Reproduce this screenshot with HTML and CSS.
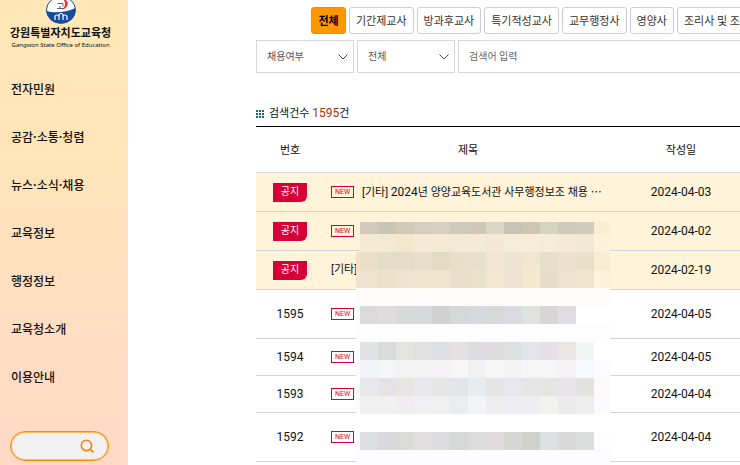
FILE: index.html
```
<!DOCTYPE html>
<html lang="ko">
<head>
    <meta charset="UTF-8">
    <meta name="viewport" content="width=device-width, initial-scale=1.0">
    <title>강원특별자치도교육청</title>
    <link rel="stylesheet" href="styles.css">
</head>
<body>
    <aside class="sidebar">
        <a href="#" class="logo">
            <svg class="emblem" viewBox="0 0 30 26" aria-hidden="true">
                <ellipse cx="15" cy="10" rx="14.500" ry="13.300" fill="#fff" stroke="#174a98"/>
                <path d="M.5 11C8 13.500 20 12.500 29.300 8C30.500 17 24 23.500 15 23.500C7 23.500 1 18 .5 11Z" fill="#174a98"/>
                <path d="M17-1C24 0 23 8 16 10C19.500 7 20 2 17-1Z" fill="#e5333e"/>
                <path d="M11.500 3.500h5.500v3M11 8.500h7M14 6v2" fill="none" stroke="#555" stroke-width=".9"/>
                <path d="M9 20v-3q0-2 2-2t2 2v3M13 20v-4.500q0-2 2-2t2 2v4.500M17 20v-3q0-2 2-2t2 2v3" fill="none" stroke="#fff" stroke-width="1.200"/>
            </svg>
            <span class="logo-name">강원특별자치도교육청</span>
            <span class="logo-sub">Gangwon State Office of Education</span>
        </a>
        <nav class="menu">
            <a href="#">전자민원</a>
            <a href="#">공감·소통·청렴</a>
            <a href="#">뉴스·소식·채용</a>
            <a href="#">교육정보</a>
            <a href="#">행정정보</a>
            <a href="#">교육청소개</a>
            <a href="#">이용안내</a>
        </nav>
        <form class="side-search">
            <input type="text" aria-label="통합검색">
            <button type="button" aria-label="검색">
                <svg viewBox="0 0 14 14" aria-hidden="true">
                    <circle cx="6" cy="6" r="4.800"/>
                    <path d="M9.500 9.500L12.500 12.500"/>
                </svg>
            </button>
        </form>
    </aside>

    <main class="content">
        <div class="tabs">
            <button type="button" class="active">전체</button>
            <button type="button">기간제교사</button>
            <button type="button">방과후교사</button>
            <button type="button">특기적성교사</button>
            <button type="button">교무행정사</button>
            <button type="button">영양사</button>
            <button type="button">조리사 및 조리원</button>
        </div>

        <form class="filters">
            <div class="select">
                <select aria-label="채용여부"><option>채용여부</option></select>
                <svg viewBox="0 0 10 6" aria-hidden="true"><path d="M.5.5L5 5L9.500.5"/></svg>
            </div>
            <div class="select">
                <select aria-label="검색구분"><option>전체</option></select>
                <svg viewBox="0 0 10 6" aria-hidden="true"><path d="M.5.5L5 5L9.500.5"/></svg>
            </div>
            <input type="text" placeholder="검색어 입력" aria-label="검색어 입력">
        </form>

        <p class="count">
            <svg viewBox="0 0 8 8" aria-hidden="true">
                <path d="M0 1h2M3 1h2M6 1h2M0 4h2M3 4h2M6 4h2M0 7h2M3 7h2M6 7h2"/>
            </svg>
            <span>검색건수 <strong>1595</strong>건</span>
        </p>

        <div class="board">
            <table>
                <thead>
                    <tr><th class="col-no">번호</th><th class="col-title">제목</th><th class="col-date">작성일</th></tr>
                </thead>
                <tbody>
                    <tr class="notice">
                        <td><span class="badge">공지</span></td>
                        <td class="title"><span class="new">NEW</span><a href="#">[기타] <span class="num">2024</span>년 양양교육도서관 사무행정보조 채용 ⋯</a></td>
                        <td>2024-04-03</td>
                    </tr>
                    <tr class="notice">
                        <td><span class="badge">공지</span></td>
                        <td class="title"><span class="new">NEW</span></td>
                        <td>2024-04-02</td>
                    </tr>
                    <tr class="notice">
                        <td><span class="badge">공지</span></td>
                        <td class="title"><a href="#">[기타]</a></td>
                        <td>2024-02-19</td>
                    </tr>
                    <tr class="tall"><td>1595</td><td class="title"><span class="new">NEW</span></td><td>2024-04-05</td></tr>
                    <tr><td>1594</td><td class="title"><span class="new">NEW</span></td><td>2024-04-05</td></tr>
                    <tr><td>1593</td><td class="title"><span class="new">NEW</span></td><td>2024-04-04</td></tr>
                    <tr class="tall"><td>1592</td><td class="title"><span class="new">NEW</span></td><td>2024-04-04</td></tr>
                </tbody>
            </table>
            <svg class="mosaic" id="mosaic" viewBox="0 0 254 246" aria-hidden="true"></svg>
        </div>
    </main>
    <script src="script.js"></script>
</body>
</html>
```
FILE: styles.css
```
* {
    box-sizing: border-box;
}

body {
    margin: 0;
    display: flex;
    min-height: 100vh;
    overflow: hidden;
    background-color: #fff;
    color: #111;
    font-family: Roboto, "Noto Sans CJK KR", sans-serif;
    font-size: 11px;
}

a {
    color: inherit;
    text-decoration: none;
}

button, input, select {
    font: inherit;
    color: inherit;
}

/* Sidebar */
.sidebar {
    flex: 0 0 128px;
    height: 100vh;
    padding: 0 10px 4px;
    display: flex;
    flex-direction: column;
    background: linear-gradient(#ffe8b8, #ffe4b9 35%, #ffdcc4 80%, #ffdac6);
}

.logo {
    display: flex;
    flex-direction: column;
    align-items: center;
    align-self: flex-start;
    white-space: nowrap;
}

.emblem {
    width: 30px;
    height: 26px;
}

.logo-name {
    font-size: 11px;
    font-weight: 700;
    line-height: 16px;
}

.logo-sub {
    font-family: "Noto Sans", sans-serif;
    font-size: 6px;
    line-height: 6px;
}

.menu {
    display: flex;
    flex-direction: column;
    gap: 30px;
    margin-top: 32px;
    padding-left: 1px;
    font-family: "Noto Sans CJK KR", sans-serif;
    font-size: 12px;
    font-weight: 500;
    line-height: 18px;
    white-space: nowrap;
}

.side-search {
    display: flex;
    align-items: center;
    height: 30px;
    margin-top: auto;
    padding-right: 13px;
    width: 99px;
    border: 1px solid #ff8a0c;
    border-radius: 15px;
    background-color: #f1f1f1;
    box-shadow: inset 0 0 0 1px #ffb765;
}

.side-search input {
    flex: 1;
    min-width: 0;
    border: 0;
    padding: 0 0 0 10px;
    background: none;
}

.side-search button {
    display: flex;
    padding: 0;
    border: 0;
    background: none;
}

.side-search svg {
    width: 15px;
    height: 15px;
    fill: none;
    stroke: #f58510;
    stroke-width: 1.5;
}

/* Content */
.content {
    flex: 1;
    min-width: 0;
    padding: 7px 0 0 128px;
}

.tabs {
    display: flex;
    gap: 3px;
    padding-left: 55px;
    white-space: nowrap;
}

.tabs button {
    flex: none;
    min-width: 35px;
    height: 27px;
    padding: 0 6px 2px;
    border: 1px solid #ccced5;
    border-radius: 3px;
    background-color: #fff;
    color: #333;
}

.tabs .active {
    border-color: #f28c0c;
    background-color: #ff9800;
    color: #000;
    font-weight: 700;
}

.filters {
    display: flex;
    gap: 3px;
    margin-top: 6px;
    color: #555;
    font-size: 10px;
}

.select {
    position: relative;
    flex: 0 0 98px;
}

.select select,
.filters input {
    width: 100%;
    height: 33px;
    padding: 0 10px;
    border: 1px solid #d5d6de;
    border-radius: 0;
    background-color: #fff;
    appearance: none;
}

.filters input {
    flex: 1;
    border-right: 0;
}

.filters input::placeholder {
    color: #666;
}

.select svg {
    position: absolute;
    top: 14px;
    right: 6px;
    width: 10px;
    height: 6px;
    fill: none;
    stroke: #444;
}

.count {
    display: flex;
    align-items: center;
    gap: 5px;
    margin: 31px 0 3px;
    line-height: 18px;
}

.count svg {
    width: 8px;
    height: 8px;
    stroke: #14706f;
    stroke-width: 2;
}

.count strong {
    color: #a5300b;
    font-size: 12px;
    font-weight: 400;
}

/* Board list */
.board {
    position: relative;
}

table {
    width: 100%;
    table-layout: fixed;
    border-collapse: separate;
    border-spacing: 0;
    border-top: 1px solid #000;
}

th {
    height: 46px;
    padding: 0 0 2px;
    border-bottom: 1px solid #d3d3db;
    font-weight: 400;
}

.col-no {
    width: 68px;
}

.col-title {
    width: 288px;
}

td {
    height: 37px;
    padding: 0;
    border-bottom: 1px solid #d3d3db;
    font-size: 12px;
    line-height: 18px;
    text-align: center;
}

th:last-child,
td:last-child {
    padding-left: 10px;
}

.notice td {
    height: 39px;
    background-color: #fff3d9;
}

.tall td {
    height: 49px;
}

.title {
    padding-left: 7px;
    font-size: 11px;
    text-align: left;
    white-space: nowrap;
}

.num {
    font-size: 12px;
}

.badge {
    display: inline-block;
    width: 34px;
    height: 19px;
    border-radius: 0 0 6px 0;
    background-color: #d50037;
    color: #fff;
    font-size: 10px;
    line-height: 18px;
    vertical-align: middle;
}

.new {
    display: inline-block;
    width: 23px;
    height: 12px;
    margin-right: 8px;
    border: 1px solid #d50037;
    color: #d50037;
    font-size: 7px;
    line-height: 10px;
    text-align: center;
    vertical-align: middle;
}

.title a {
    vertical-align: middle;
}

/* Masked titles */
.mosaic {
    position: absolute;
    top: 93px;
    left: 100px;
    width: 254px;
    height: 246px;
    shape-rendering: crispEdges;
}
```
FILE: script.js
```
const mosaic = document.getElementById("mosaic");
const widths = [4, 18, 18, 18, 18, 18, 18, 18, 18, 18, 18, 18, 18, 18, 16];

// each row: top, height, then one colour per column
const rows = [
    [3, 12, "none #d3cabd #c7c6b4 #d1cab7 #d5cdc0 #d9cfc1 #cdc9bc #d0c8b7 #ddd5c6 #c9c1b4 #cdc6b2 #d5d4be #cfc9b8 #cfccbb #f6eed5"],
    [15, 18, "none #f4ead4 #f4ead3 #f2e8d0 #f4ead5 #f4ead4 #f3ead5 #f4ebd6 #f2e8d5 #f6edd8 #f7eed9 #f5ecd7 #f4ead6 #f2e9d4 #fdf1d9"],
    [33, 18, "#eee2cb #ebdfc8 #e3dcc6 #e4dcc6 #e7dec9 #e1dbc4 #e8dfc9 #e8e0ca #f0e6d1 #ece4d0 #f1e7d0 #e5dec9 #ebe1cc #e8e0c9 #f6edd3"],
    [51, 18, "#f0e5ce #ede3ce #ece2cb #ede3cf #efe5ce #f0e6d0 #e9dfca #eae1cb #f2e7d1 #ece2cf #f3e9ce #e5ddc8 #ece2cf #f0e6cf #fcf1d9"],
    [69, 18, "#fdfcfb #fdfcfb #fdfcfb #fdfcfb #fdfcfb #fdfcfb #fdfcfb #fdfcfb #fdfcfb #fdfcfb #fdfcfb #fdfcfb #fdfcfb #fdfcfb #fdfcfb"],
    [87, 18, "#fdfdfd #dadada #dfdcde #d8dada #d7d9da #d1d1d1 #d6d7d7 #d8d9dc #d7d9d8 #dadae0 #dfe3df #d8d5d7 #e0dee2 #fff #fff"],
    [105, 18, "#fdfdfd #fdfdfd #fdfdfd #fdfdfd #fdfdfd #fdfdfd #fdfdfd #fdfdfd #fdfdfd #fdfdfd #fdfdfd #fdfdfd #fdfdfd #fdfdfd #fdfdfd"],
    [123, 18, "#fdfdfd #e1e2e5 #dadada #e3e4e1 #e1e1e1 #dfe0e3 #e3e1e1 #dddde1 #dedcdd #dee1df #e4e5e9 #e3e1e3 #e9e7e6 #f3f5f4 #fff"],
    [141, 18, "#fdfdfd #f2f3f6 #f5f6fa #f3f3f3 #f3f3f3 #f4f2f4 #f6f6f6 #f1f1f1 #f7f7f7 #f4f4f4 #f6f6f7 #f6f6f6 #f4f2f4 #f7f8fb #fcfcff"],
    [159, 18, "#fbfbfc #e8e8eb #e4e2e6 #e7e5e2 #e9e9eb #e4e5e4 #e2e4e7 #eaebed #e4e4e4 #e8e8ec #e5e5e5 #e4e4e3 #e6e4e6 #e2e2e0 #fbf9f9"],
    [177, 18, "#fcfcfc #f0f0f0 #f0f0f0 #efedef #f0f0f3 #efefef #ebecef #f3f4f7 #eeeef1 #eeeef2 #eeeef1 #f1f2f0 #ebebeb #eeeeee #fbfbfd"],
    [195, 18, "#fff #fff #fff #fff #fff #fff #fff #fff #fff #fff #fff #fff #fff #fff #fff"],
    [213, 18, "#fcfcfd #dddee1 #d9d8dc #dadad7 #e1dfdf #dcdbdd #d6d7d7 #dddcdd #dedcdd #d6d6d4 #d1d1cb #dee1e3 #d9d9d9 #dadddc #fdfdfd"],
    [231, 15, "#fcfcfe #fcfcfe #fcfcfe #fcfcfe #fcfcfe #fcfcfe #fcfcfe #fcfcfe #fcfcfe #fcfcfe #fcfcfe #fcfcfe #fcfcfe #fcfcfe #fcfcfe"]
];

rows.forEach(([top, height, colors]) => {
    let x = 0;
    colors.split(" ").forEach((color, i) => {
        const rect = document.createElementNS("http://www.w3.org/2000/svg", "rect");
        rect.setAttribute("x", x);
        rect.setAttribute("y", top);
        rect.setAttribute("width", widths[i]);
        rect.setAttribute("height", height);
        rect.setAttribute("fill", color);
        mosaic.appendChild(rect);
        x += widths[i];
    });
});
```
